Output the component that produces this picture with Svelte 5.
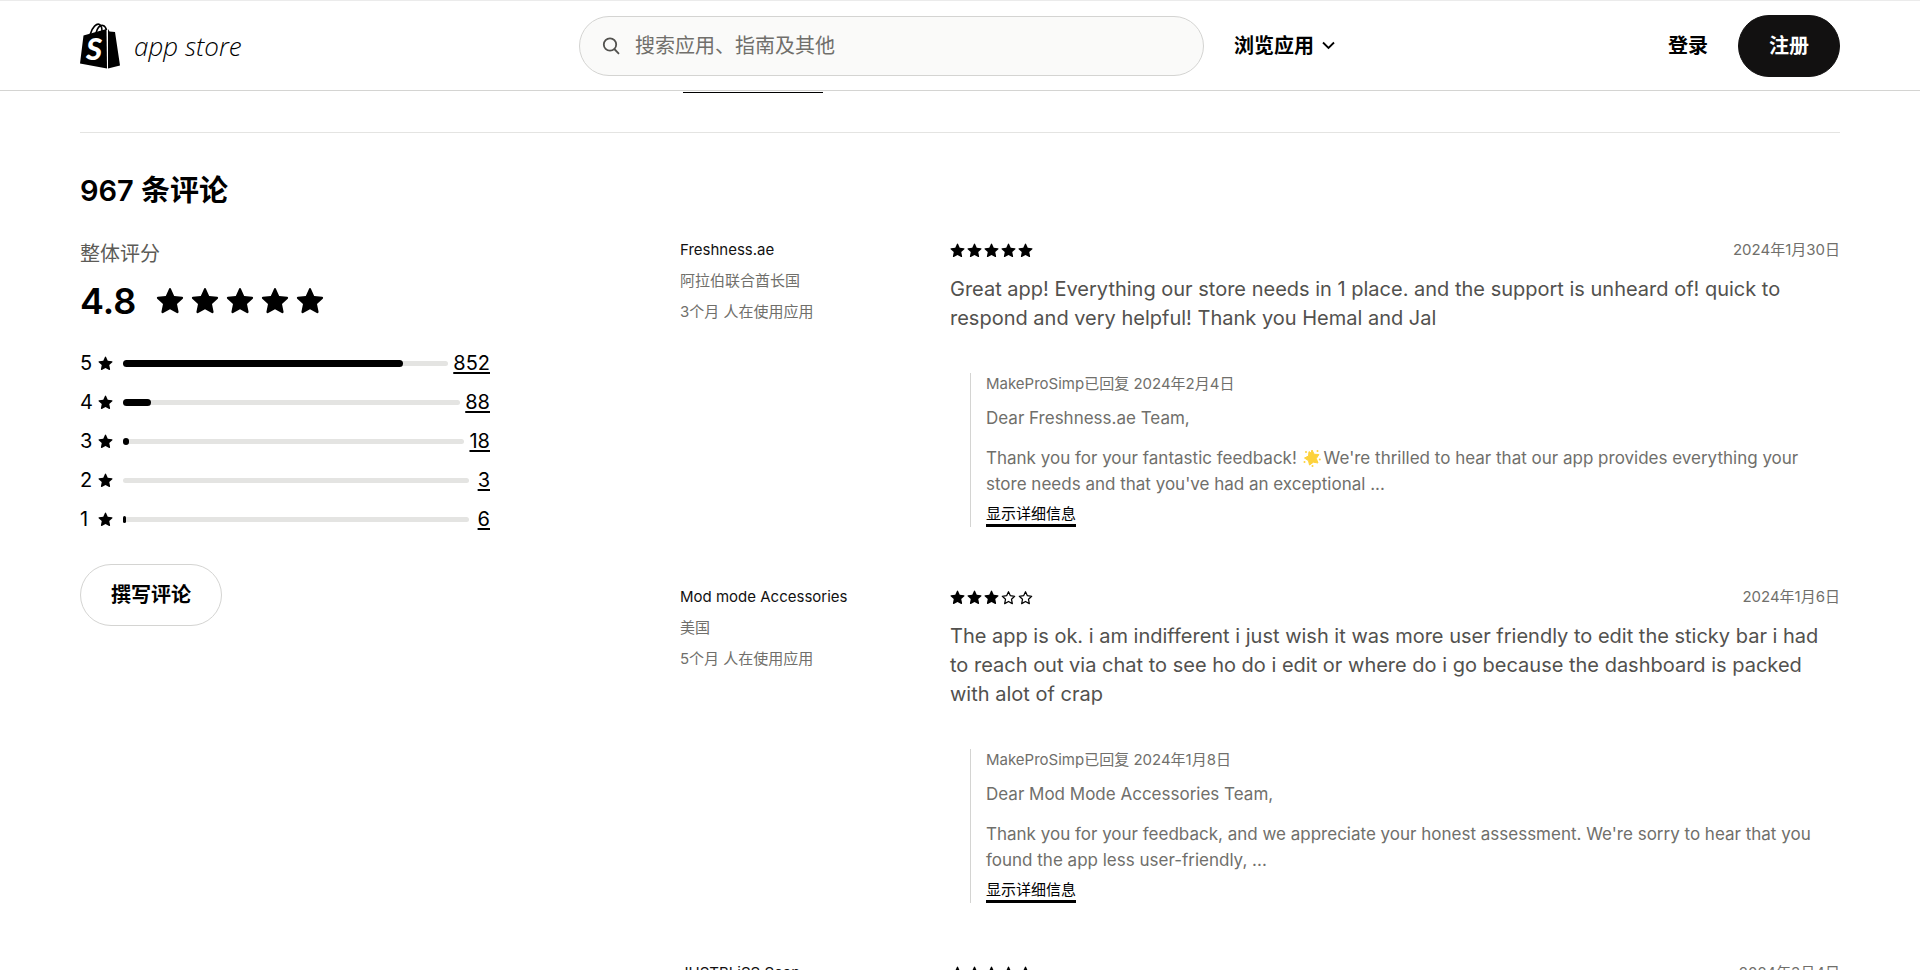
<script>
  let query = "";

  const ratings = [
    { stars: 5, count: 852, width: 86 },
    { stars: 4, count: 88, width: 8.4 },
    { stars: 3, count: 18, width: 1.9 },
    { stars: 2, count: 3, width: 0 },
    { stars: 1, count: 6, width: 1 }
  ];

  const reviews = [
    {
      author: "Freshness.ae",
      country: "阿拉伯联合酋长国",
      usage: "3个月 人在使用应用",
      stars: 5,
      date: "2024年1月30日",
      text:
        "Great app! Everything our store needs in 1 place. and the support is unheard of! quick to respond and very helpful! Thank you Hemal and Jal",
      reply: {
        header: "MakeProSimp已回复 2024年2月4日",
        greeting: "Dear Freshness.ae Team,",
        before: "Thank you for your fantastic feedback! ",
        glow: true,
        body:
          "We're thrilled to hear that our app provides everything your store needs and that you've had an exceptional ..."
      }
    },
    {
      author: "Mod mode Accessories",
      country: "美国",
      usage: "5个月 人在使用应用",
      stars: 3,
      date: "2024年1月6日",
      text:
        "The app is ok. i am indifferent i just wish it was more user friendly to edit the sticky bar i had to reach out via chat to see ho do i edit or where do i go because the dashboard is packed with alot of crap",
      reply: {
        header: "MakeProSimp已回复 2024年1月8日",
        greeting: "Dear Mod Mode Accessories Team,",
        before: "",
        glow: false,
        body:
          "Thank you for your feedback, and we appreciate your honest assessment. We're sorry to hear that you found the app less user-friendly, ..."
      }
    },
    {
      author: "JUSTBLiSS Scan",
      stars: 5,
      date: "2024年3月4日"
    }
  ];

  const star =
    "M8 .6c.3 0 .5.2.6.5l1.8 4 4.5.5c.6.1.8.7.4 1.1L12 9.7l.9 4.5c.1.6-.5 1-1 .7L8 12.7l-3.9 2.2c-.5.3-1.1-.1-1-.7L4 9.7.7 6.7c-.4-.4-.2-1 .4-1.1l4.5-.5 1.8-4C7.5.8 7.7.6 8 .6z";
</script>

<style>
  :global(html) {
    overflow-x: hidden;
  }
  :global(body) {
    height: 100vh;
    overflow: hidden;
    background: #fff;
  }
  .page {
    color: #000;
    font-family: Inter, "Noto Sans CJK SC", sans-serif;
    font-size: 20px;
    line-height: 30px;
  }
  .page * {
    box-sizing: border-box;
  }
  p,
  h2 {
    margin: 0;
  }
  a {
    color: inherit;
    text-decoration: none;
  }
  button {
    font: inherit;
    color: inherit;
    cursor: pointer;
  }
  svg {
    display: block;
    flex: none;
  }

  .header {
    display: grid;
    grid-template-columns: 469px 625px 1fr;
    align-items: center;
    gap: 30px;
    height: 91px;
    padding: 0 80px;
    border-top: 1px solid #ebebeb;
    border-bottom: 1px solid #d4d4d2;
  }
  .logo {
    display: flex;
    align-items: center;
    gap: 14px;
  }
  .logo-text {
    font-family: "Open Sans", sans-serif;
    font-size: 26px;
    font-style: italic;
    font-weight: 300;
  }
  .search {
    display: flex;
    align-items: center;
    gap: 15px;
    height: 60px;
    padding: 0 22px;
    border: 1px solid #d4d4d2;
    border-radius: 30px;
    background: #fafaf9;
  }
  .search input {
    flex: 1;
    min-width: 0;
    padding: 0;
    border: 0;
    outline: 0;
    background: none;
    font: inherit;
  }
  .search input::placeholder {
    color: #706f6b;
    opacity: 1;
  }
  .nav {
    display: flex;
    align-items: center;
    font-weight: 600;
  }
  .browse {
    display: flex;
    align-items: center;
    gap: 8px;
    margin-right: auto;
    padding: 0;
    border: 0;
    background: none;
  }
  .pill {
    padding: 15px 30px;
    border: 1px solid #d4d4d2;
    border-radius: 31px;
    background: #fff;
    font-weight: 600;
  }
  .pill.dark {
    margin-left: 30px;
    border-color: #121111;
    background: #121111;
    color: #fff;
  }

  .main {
    padding: 0 80px;
  }
  .columns {
    display: grid;
    grid-template-columns: repeat(12, 1fr);
    column-gap: 40px;
  }
  .tabs {
    height: 42px;
    padding-top: 1px;
    border-bottom: 1px solid #e4e4e2;
  }
  .tab-line {
    grid-column: 5 / span 2;
    width: 140px;
    height: 1px;
    margin-left: 3px;
    background: #000;
  }
  h2 {
    margin: 38px 0 29px;
    font-size: 29px;
    font-weight: 600;
    line-height: 40px;
  }
  .summary {
    grid-column: 1 / span 3;
  }
  .label {
    margin-bottom: 14px;
    color: #5c5b57;
    line-height: 28px;
  }
  .overall {
    display: flex;
    align-items: center;
    gap: 20px;
    margin-bottom: 28px;
    font-size: 36px;
    font-weight: 600;
    line-height: 38px;
  }
  .stars {
    display: flex;
    gap: 2px;
  }
  .overall .stars {
    gap: 7px;
  }
  .bars {
    display: grid;
    gap: 9px;
    margin: 0 0 30px;
    padding: 0;
    list-style: none;
  }
  .bars li {
    display: flex;
    align-items: center;
  }
  .num {
    width: 18px;
  }
  .track {
    display: flex;
    align-items: center;
    flex: 1;
    height: 5px;
    margin: 0 5px 0 10px;
    border-radius: 3px;
    background: #e4e4e2;
  }
  .fill {
    height: 7px;
    border-radius: 4px;
    background: #000;
  }
  .count {
    min-width: 16px;
    text-align: right;
    text-decoration: underline;
    text-decoration-thickness: 2px;
    text-underline-offset: 2px;
  }

  .reviews {
    grid-column: 5 / span 8;
  }
  .review {
    display: grid;
    grid-template-columns: 240px 1fr;
    gap: 30px;
    margin-bottom: 60px;
  }
  .small {
    font-size: 15px;
    line-height: 20px;
    color: #706f6b;
  }
  .who {
    display: grid;
    align-content: start;
    gap: 11px;
  }
  .author {
    color: #121111;
  }
  .top {
    display: flex;
    align-items: center;
    justify-content: space-between;
    margin-bottom: 15px;
  }
  .text {
    color: #52514e;
    line-height: 29px;
  }
  .reply {
    margin: 40px 0 0 20px;
    padding-left: 15px;
    border-left: 1px solid #d4d4d2;
    color: #706f6b;
    font-size: 17px;
    line-height: 26px;
  }
  .reply p {
    margin-bottom: 14px;
  }
  .reply p.small {
    margin-bottom: 10px;
    line-height: 22px;
  }
  .reply p.last {
    margin-bottom: 7px;
  }
  .glow {
    display: inline-block;
    margin: 0 3px 0 1px;
    vertical-align: -3px;
  }
  .more {
    display: block;
    padding: 0;
    border: 0;
    border-bottom: 3px solid #000;
    background: none;
    color: #000;
    font-size: 15px;
    line-height: 20px;
  }
</style>

{#snippet starIcon(size, filled)}
  <svg width={size} height={size} viewBox="0 0 16 16">
    {#if filled}
      <path d={star} />
    {:else}
      <path
        d="M8 1.8l2 4.3 4.6.6-3.4 3.2.9 4.6L8 12.2l-4.1 2.3.9-4.6L1.4 6.7 6 6.1z"
        fill="none"
        stroke="#000"
        stroke-width="1.3"
        stroke-linejoin="round" />
    {/if}
  </svg>
{/snippet}

<div class="page">
  <header class="header">
    <a class="logo" href="#home" aria-label="app store">
      <svg width="40" height="46" viewBox="0 0 40 46">
        <path d="M3.5 12.5 26.5 6 27 45.500 0 40.5z" />
        <path d="M28 6l1.5 2.500 5.500.5 5 33.500-12 3z" />
        <path
          d="M10 12C12 4 17 0 19.500 1.500 22 3 22 6 22 8M16 10c1.500-5.500 4.500-8 7-7.500C25 3 26 5 26.500 7"
          fill="none"
          stroke="#000"
          stroke-width="1.600" />
        <text
          x="6"
          y="37"
          fill="#fff"
          font-family="Lato, sans-serif"
          font-size="31"
          font-style="italic"
          font-weight="900">S</text>
      </svg>
      <span class="logo-text">app store</span>
    </a>
    <label class="search">
      <svg width="18" height="18" viewBox="0 0 18 18" fill="none" stroke="#52514e" stroke-width="1.8">
        <circle cx="8" cy="7.5" r="6.2" />
        <path d="M12.3 12 17 16.8" />
      </svg>
      <input type="text" aria-label="搜索" placeholder="搜索应用、指南及其他" bind:value={query} />
    </label>
    <nav class="nav">
      <button class="browse">
        浏览应用
        <svg width="13" height="9" viewBox="0 0 13 9" fill="none" stroke="#000" stroke-width="1.8">
          <path d="M1 1.5 6.5 7 12 1.5" />
        </svg>
      </button>
      <a href="#login">登录</a>
      <button class="pill dark">注册</button>
    </nav>
  </header>

  <main class="main">
    <div class="tabs columns">
      <div class="tab-line"></div>
    </div>
    <h2>967 条评论</h2>
    <div class="columns">
      <section class="summary">
        <p class="label">整体评分</p>
        <div class="overall">
          4.8
          <div class="stars">
            {#each Array(5) as _}
              {@render starIcon(28, true)}
            {/each}
          </div>
        </div>
        <ul class="bars">
          {#each ratings as row}
            <li>
              <span class="num">{row.stars}</span>
              {@render starIcon(15, true)}
              <div class="track">
                <div class="fill" style="width:{row.width}%"></div>
              </div>
              <a class="count" href="#reviews">{row.count}</a>
            </li>
          {/each}
        </ul>
        <button class="pill">撰写评论</button>
      </section>

      <section class="reviews" id="reviews">
        {#each reviews as review}
          <article class="review">
            <div class="who small">
              <span class="author">{review.author}</span>
              {#if review.country}
                <span>{review.country}</span>
                <span>{review.usage}</span>
              {/if}
            </div>
            <div>
              <div class="top">
                <div class="stars">
                  {#each Array(5) as _, i}
                    {@render starIcon(15, i < review.stars)}
                  {/each}
                </div>
                <span class="small">{review.date}</span>
              </div>
              {#if review.text}
                <p class="text">{review.text}</p>
              {/if}
              {#if review.reply}
                <div class="reply">
                  <p class="small">{review.reply.header}</p>
                  <p>{review.reply.greeting}</p>
                  <p class="last">
                    {review.reply.before}{#if review.reply.glow}<svg class="glow" width="18" height="18" viewBox="0 0 18 18" fill="#fdd23c">
                        <path d="M9 1l2.2 4.3 4.7.2-2.6 4 1.7 4.5-4.6-.8L6.5 16l-1-4.3L1.5 9l4-2L6 2.6l2 1.5z" stroke="#fdd23c" stroke-linejoin="round" />
                        <circle cx="3" cy="3" r="1" />
                        <circle cx="14.5" cy="2" r="1" />
                        <circle cx="16.8" cy="10.5" r="1" />
                        <circle cx="9.5" cy="17" r="1" />
                        <circle cx="1.5" cy="13" r="1" />
                      </svg>{/if}{review.reply.body}
                  </p>
                  <button class="more">显示详细信息</button>
                </div>
              {/if}
            </div>
          </article>
        {/each}
      </section>
    </div>
  </main>
</div>
